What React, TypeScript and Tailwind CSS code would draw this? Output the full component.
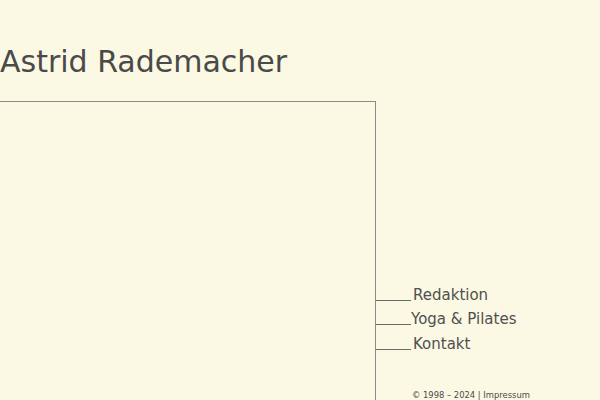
import React from "react";

export default function App() {
  const items = [
    { label: "Redaktion", gap: "ml-[2px]" },
    { label: "Yoga & Pilates", gap: "ml-0" },
    { label: "Kontakt", gap: "ml-[2px]" },
  ];
  return (
    <div className="w-[600px] h-[400px] overflow-hidden bg-[#fbf8e3] text-[#4a4a4a] flex flex-col" style={{ fontFamily: '"DejaVu Sans", Verdana, sans-serif' }}>
      <h1 className="shrink-0 h-[101px] pt-[44px] text-[30px] leading-[36px] font-normal">Astrid Rademacher</h1>
      <div className="flex flex-1">
        <div className="w-[376px] border-t border-r border-[#8a8a86]" />
        <div className="flex flex-col pt-[179px]">
          {items.map((it) => (
            <div key={it.label} className="flex items-end h-[24.5px]">
              <div className="w-[35px] border-b border-[#6b6b68] mb-[4px]" />
              <span className={`${it.gap} text-[15px] leading-[20px] text-[#505050]`}>{it.label}</span>
            </div>
          ))}
          <div className="mt-[35px] ml-[36px] text-[8.4px] leading-[12px]">© 1998 – 2024 | Impressum</div>
        </div>
      </div>
    </div>
  );
}
